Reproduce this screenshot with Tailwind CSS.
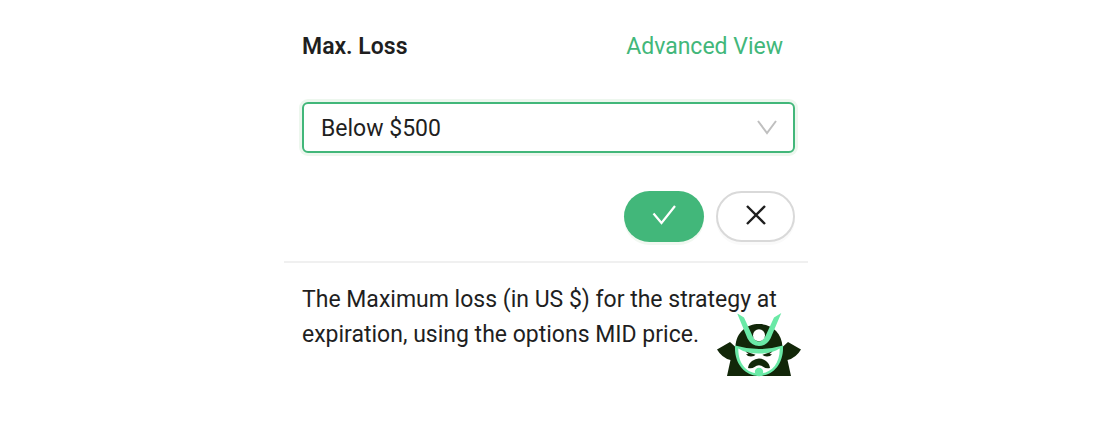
<!DOCTYPE html>
<html lang="en">

<head>
    <meta charset="UTF-8">
    <meta name="viewport" content="width=device-width, initial-scale=1.0">
    <title>Max. Loss</title>
    <script src="https://cdn.jsdelivr.net/npm/@tailwindcss/browser@4"></script>
</head>

<body class="bg-white min-h-screen font-['Roboto',sans-serif] text-[23px] leading-[35px] text-[#1f1f1f]">
    <main class="mx-auto w-full max-w-[550px] pr-[26px]">
        <form class="pt-[29px] pl-[18px] pr-[13px] pb-[19px] border-b-2 border-[#f0f0f0]">
            <div class="flex items-center justify-between pr-3">
                <label for="max_loss" class="font-semibold">Max. Loss</label>
                <a href="#" class="text-[#42b77a]">Advanced View</a>
            </div>

            <div class="relative mt-[38px]">
                <select id="max_loss"
                    class="block w-full h-[51px] appearance-none rounded-md border-2 border-[#42b77a] bg-white pt-[2px] pl-[17px] pr-12 outline-none ring-3 ring-[#edf7ee]">
                    <option>Below $500</option>
                </select>
                <svg class="absolute right-[18px] top-[18px] w-5 h-4 pointer-events-none" viewBox="0 0 20 16" fill="none" stroke="#bfbfbf" stroke-width="2">
                    <path d="M1 1L10 13L19 1" />
                </svg>
            </div>

            <div class="mt-[38px] flex justify-end gap-3">
                <button type="button" aria-label="Apply"
                    class="flex h-[51px] w-20 items-center justify-center rounded-full bg-[#42b77a] pb-1 shadow-[0_3px_0_#f1f8f1]">
                    <svg class="w-6 h-5" viewBox="0 0 24 20" fill="none" stroke="#fff" stroke-width="2.2">
                        <path d="M1.5 8.5L9.5 18L23 1" />
                    </svg>
                </button>
                <button type="button" aria-label="Cancel"
                    class="flex h-[51px] w-[79px] items-center justify-center rounded-full border-2 border-[#d9d9d9] bg-white pb-1 shadow-[0_3px_0_#fafafa]">
                    <svg class="w-5 h-5" viewBox="0 0 20 20" fill="none" stroke="#1f1f1f" stroke-width="2.4">
                        <path d="M1 1L19 19M19 1L1 19" />
                    </svg>
                </button>
            </div>
        </form>

        <div class="relative pt-[19px] pl-[18px] pr-[13px]">
            <p>The Maximum loss (in US $) for the strategy at expiration, using the options MID price.</p>

            <!-- samurai helmet -->
            <svg class="absolute right-[6px] top-[50px] w-[86px] h-16" viewBox="6 7 86 64">
                <path fill="#122709" d="M25.5 41C26 26 37 18 49 18S72 26 72.5 41L78 36L91 43.5Q86 52 77.500 54L81 70H17L20.500 54Q12 52 7 43.5L20 36Z" />
                <path fill="#6ae9a6" d="M25 39.5Q49 46.500 73 39.5C74 58 63 70 49 70S24 58 25 39.5Z" />
                <path fill="#fff" d="M28.300 42.500Q36 47.500 49 47.500T69.700 42.500C70 58 61 67.500 49 67.500S28 58 28.300 42.500Z" />
                <path fill="#6ae9a6" d="M26.700 7L34 11.500L42.500 30Q45.500 35.500 49 35.500T55.500 30L64 11.500L71.300 7L60.500 32.500Q56.500 40 49 40T37.500 32.500L27 7Z" />
                <circle cx="49" cy="29.300" r="6" fill="#fff" />
                <path fill="#122709" d="M35.500 45.500L45.500 48.700Q44.500 50.500 41 50.500Q37.500 50.500 36 48.300L38.500 48Z" />
                <path fill="#122709" d="M62.500 45.500L52.500 48.700Q53.500 50.500 57 50.500Q60.500 50.500 62 48.300L59.500 48Z" />
                <path fill="#122709" d="M38 62Q38.500 57.500 42 55Q45.500 52.500 49 52.500T56 55Q59.500 57.500 60 62Q56 63 53.500 61Q51.500 59.300 49 59.300T44.500 61Q42 63 38 62Z" />
                <circle cx="49" cy="66" r="4.200" fill="#6ae9a6" />
            </svg>
        </div>
    </main>
</body>

</html>
